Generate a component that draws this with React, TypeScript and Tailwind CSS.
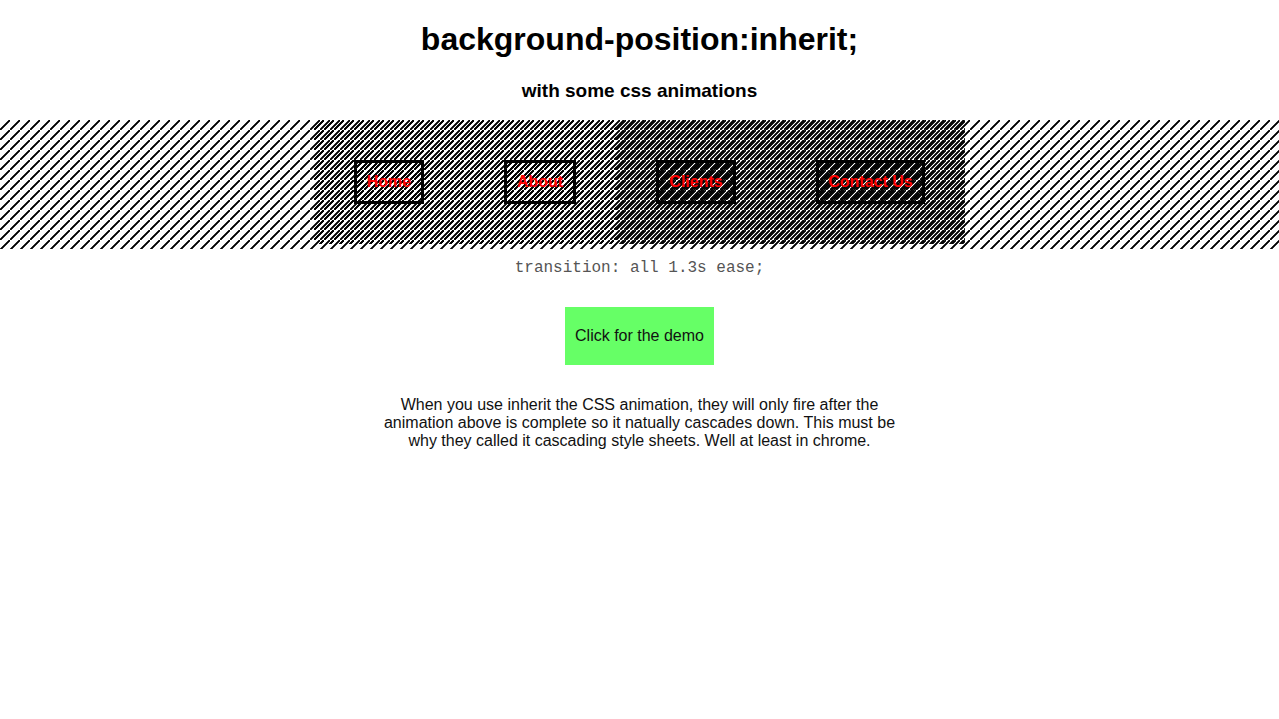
const stripes =
  "bg-[linear-gradient(135deg,transparent_41%,#000_46%,#000_54%,transparent_59%)] bg-[length:10px_10px]";

const links = [
  { label: "Home", href: "#home", width: "w-[70px]" },
  { label: "About", href: "#about", width: "w-[72px]" },
  { label: "Clients", href: "#clients", width: "w-[80px]" },
  { label: "Contact Us", href: "#contact", width: "w-[109px]" },
];

export default function App() {
  return (
    <div className="bg-white pt-5 text-center font-['Liberation_Sans',Arial,sans-serif] text-base leading-[18px] text-black">
      <h1 className="text-[32px] leading-[38px] font-bold">
        background-position:inherit;
      </h1>
      <h3 className="mt-[22px] mb-[19px] text-[19px] leading-[21px] font-bold">
        with some css animations
      </h3>

      <nav className={`flex justify-center pb-[5px] ${stripes}`}>
        <ul className={`flex ${stripes}`}>
          {links.map((link) => (
            <li key={link.href} className={`p-10 ${stripes}`}>
              <a
                href={link.href}
                className={`flex justify-center border-[3px] border-black py-[10px] font-bold whitespace-nowrap text-[#f00] ${link.width} ${stripes}`}
              >
                {link.label}
              </a>
            </li>
          ))}
        </ul>
      </nav>

      <code className="mt-[10px] block font-['Liberation_Mono','Courier_New',monospace] text-base leading-[18px] text-[#555]">
        transition: all 1.3s ease;
      </code>

      <button
        type="button"
        className="mt-[30px] cursor-pointer bg-[#66ff66] px-[10px] py-5 text-[#111]"
      >
        Click for the demo
      </button>

      <p className="mx-auto mt-[31px] w-2/5 text-[#111]">
        When you use inherit the CSS animation, they will only fire after the
        animation above is complete so it natually cascades down. This must be
        why they called it cascading style sheets. Well at least in chrome.
      </p>
    </div>
  );
}
